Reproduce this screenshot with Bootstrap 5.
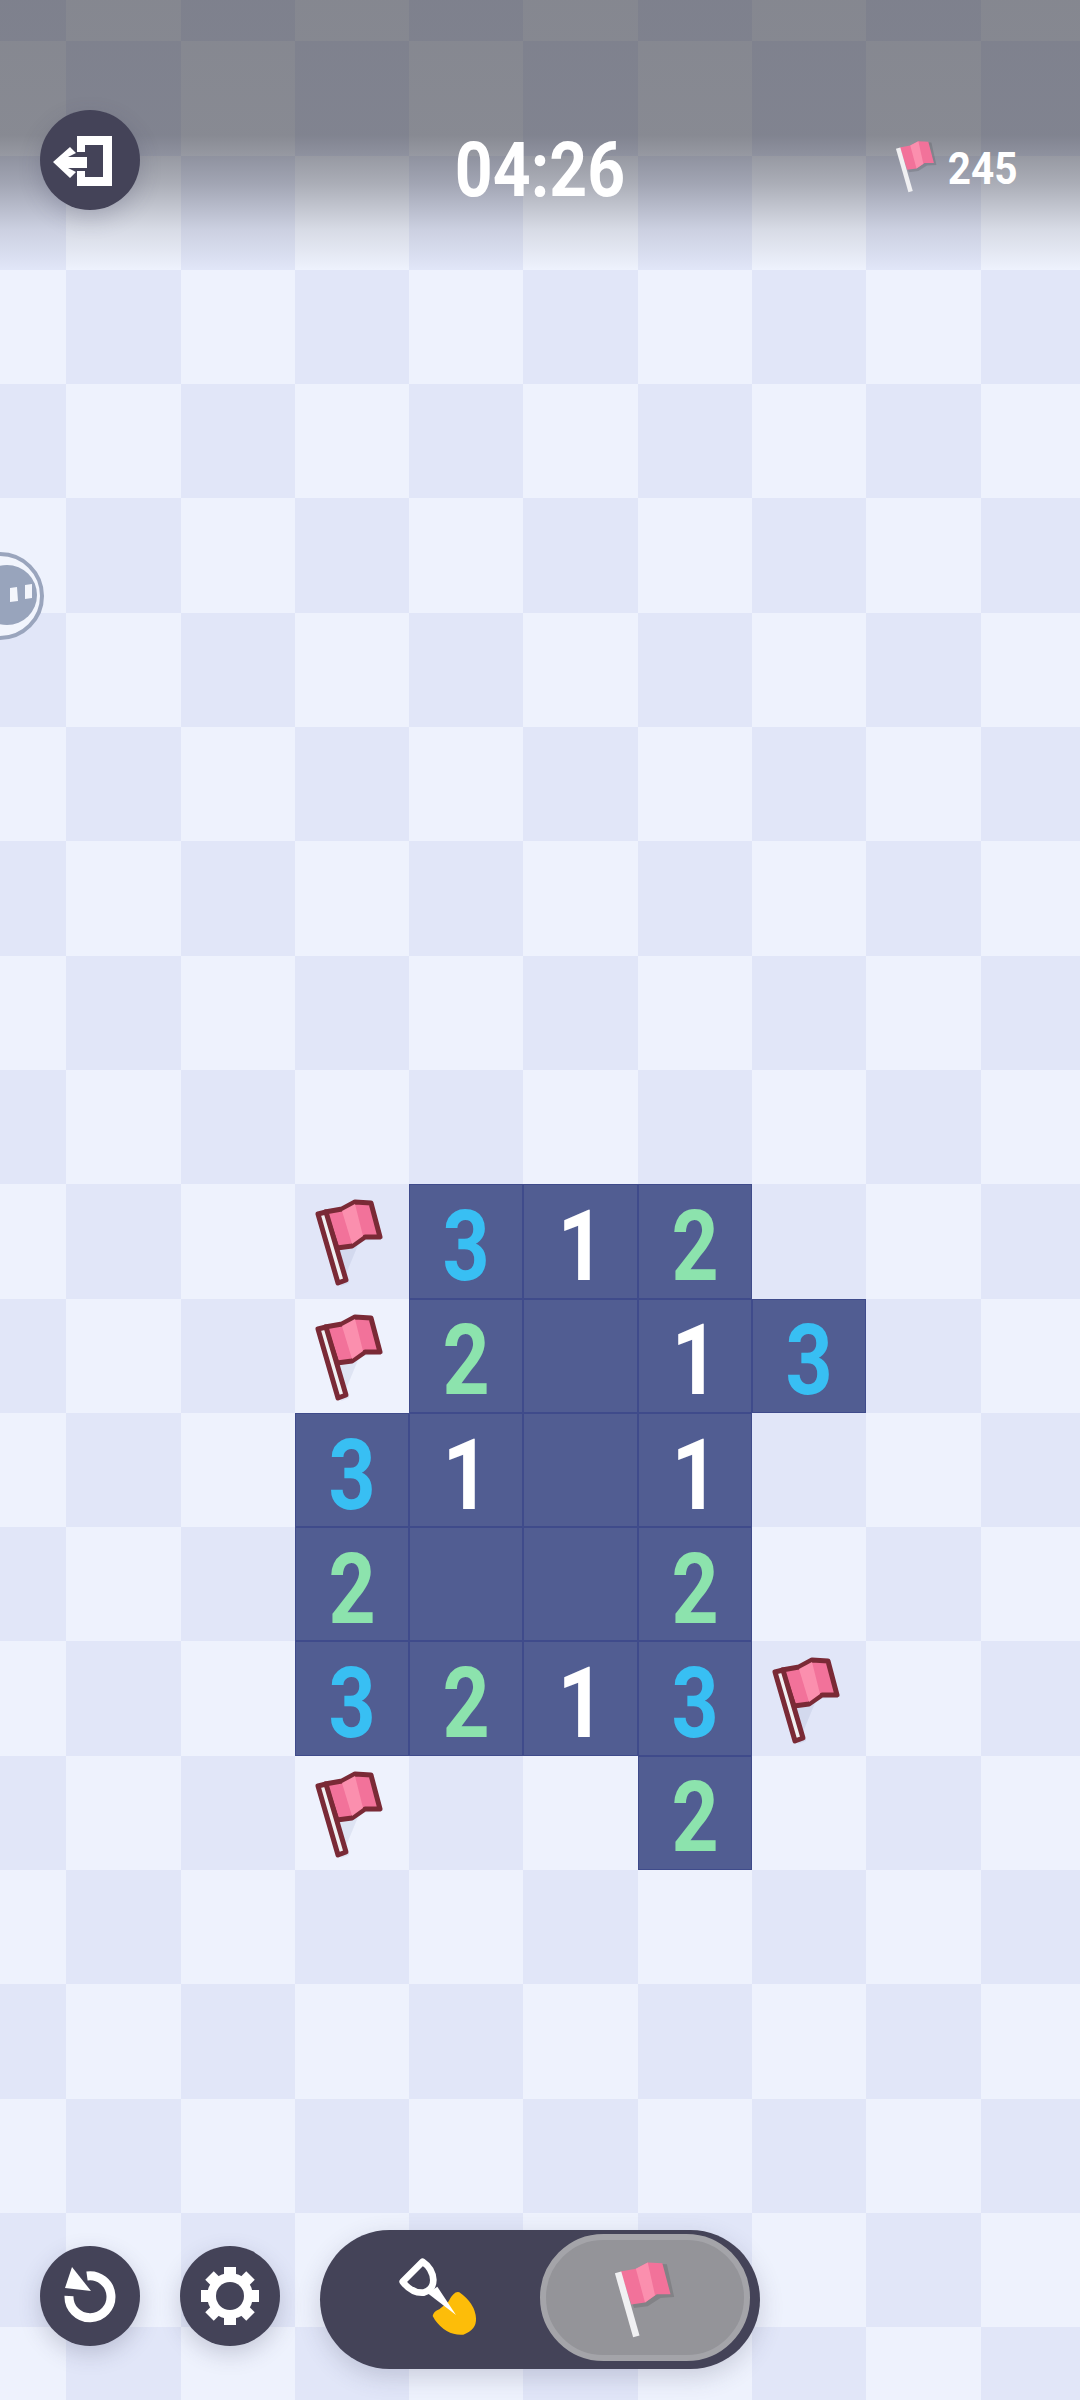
<!DOCTYPE html>
<html lang="en">
<head>
  <meta charset="UTF-8" />
  <meta name="viewport" content="width=device-width, initial-scale=1.0"/>
  <title>Minesweeper</title>
  <link href="https://cdn.jsdelivr.net/npm/bootstrap@5.3.0/dist/css/bootstrap.min.css" rel="stylesheet"/>
  <style>
    :root {
      --tile-light: #eef2fd;
      --tile-dark: #e1e6f8;
      --tile-open: #515d92;
      --tile-line: #3f4b8b;
      --ui-dark: #444358;
    }
    html, body { height: 2400px; overflow: hidden; }
    body { background: var(--tile-light); font-family: Roboto, "Liberation Sans", sans-serif; }
    .screen { width: 1080px; height: 2400px; overflow: hidden; }
    .board {
      display: grid;
      grid-template-columns: repeat(10, 114.3px);
      grid-auto-rows: 114.3px;
      margin: -73px 0 0 -48px;
      width: 1143px;
    }
    .tile { display: flex; align-items: center; justify-content: center; }
    .tile-l { background: var(--tile-light); }
    .tile-d { background: var(--tile-dark); }
    .tile-o { background: var(--tile-open); box-shadow: inset 0 0 0 1px var(--tile-line); }
    .num { font-size: 98px; font-weight: 700; line-height: 1; padding-top: 11px; transform: scaleX(.84); }
    .n1 { color: #fff; }
    .n2 { color: #8ce3ad; }
    .n3 { color: #38bff3; }
    .topshade {
      position: absolute; left: 0; top: 0; width: 1080px; height: 270px;
      background: linear-gradient(rgba(15,15,21,.47) 0, rgba(15,15,21,.46) 50%, rgba(15,15,21,.3) 68%, rgba(15,15,21,.1) 85%, rgba(15,15,21,0) 100%);
    }
    .round-btn {
      position: absolute; width: 100px; height: 100px; border-radius: 50%;
      background: var(--ui-dark); box-shadow: 0 8px 22px rgba(60,60,90,.22);
    }
    .btn-exit { left: 40px; top: 110px; }
    .btn-undo { left: 40px; top: 2246px; }
    .btn-gear { left: 180px; top: 2246px; }
    .timer {
      position: absolute; left: 0; top: 125px; width: 1080px; text-align: center;
      color: #fff; font-size: 76px; font-weight: 700; line-height: 90px; transform: scaleX(.87);
    }
    .flag-count { position: absolute; left: 881px; top: 130px; }
    .flag-total {
      position: absolute; left: 944px; top: 142px; width: 76px; text-align: center;
      color: #fff; font-size: 45px; font-weight: 700; line-height: 54px; transform: scaleX(.9);
    }
    .mode-switch {
      position: absolute; left: 320px; top: 2230px; width: 440px; height: 139px; border-radius: 70px;
      background: var(--ui-dark); box-shadow: 0 8px 24px rgba(60,60,90,.2);
    }
    .mode-on {
      position: absolute; left: 220px; top: 4px; width: 210px; height: 127px; border-radius: 64px;
      background: #949499; border: 6px solid #a4a4a9;
    }
    .shovel { position: absolute; left: 60px; top: 0; }
    .mascot { position: absolute; left: 0; top: 550px; }
  </style>
</head>
<body>
  <div class="screen position-relative">
    <div class="board" id="board"></div>

    <svg class="mascot" width="48" height="92" viewBox="0 0 48 92">
      <circle cx="0" cy="46" r="42" fill="#f2f5fd" stroke="#9aa5bd" stroke-width="4"/>
      <ellipse cx="7" cy="45" rx="30" ry="30" fill="#98a4bc"/>
      <path d="M10 38l7-1 1 14-8 1zM25 35l7-1v14l-7 1z" fill="#f4f6fc"/>
    </svg>

    <div class="topshade"></div>

    <div class="round-btn btn-exit">
      <svg width="100" height="100" viewBox="0 0 100 100">
        <path d="M37 26h35v50H37V61h8v6h18V35H45v7h-8z" fill="#fff"/>
        <path d="M13 52l17-15 6 6-8 4h19v11H28l8 4-6 6z" fill="#fff"/>
      </svg>
    </div>
    <div class="timer">04:26</div>
    <svg class="flag-count" width="71" height="71" viewBox="0 0 114 114"><use href="#flag-plain"/></svg>
    <div class="flag-total">245</div>

    <div class="round-btn btn-undo">
      <svg width="100" height="100" viewBox="0 0 100 100">
        <path d="M29 50A21 21 0 1 0 47 30" fill="none" stroke="#fff" stroke-width="9"/>
        <path d="M32 21l-7 21 26 3z" fill="#fff"/>
      </svg>
    </div>
    <div class="round-btn btn-gear">
      <svg width="100" height="100" viewBox="0 0 100 100">
        <g fill="#fff">
          <circle cx="50" cy="50" r="23"/>
          <rect x="44" y="21" width="12" height="58"/>
          <rect x="44" y="21" width="12" height="58" transform="rotate(45 50 50)"/>
          <rect x="44" y="21" width="12" height="58" transform="rotate(90 50 50)"/>
          <rect x="44" y="21" width="12" height="58" transform="rotate(135 50 50)"/>
        </g>
        <circle cx="50" cy="50" r="14" fill="#444358"/>
      </svg>
    </div>

    <div class="mode-switch">
      <svg class="shovel" width="180" height="130" viewBox="0 0 540 390">
        <path d="M158 258Q160 245 178 238L205 215Q222 182 238 187Q285 220 288 265Q290 300 250 314Q200 318 165 270Z" fill="#fdbd09"/>
        <path d="M143 190L172 170 228 255Z" fill="#fff"/>
        <path d="M68 155L128 95Q158 115 160 150Q160 180 130 188Q95 190 68 155Z" fill="none" stroke="#fff" stroke-width="20" stroke-linejoin="round"/>
      </svg>
      <div class="mode-on d-flex align-items-center justify-content-center">
        <svg width="104" height="104" viewBox="0 0 114 114"><use href="#flag-plain"/></svg>
      </div>
    </div>
  </div>

  <svg width="0" height="0" class="position-absolute">
    <defs>
      <g id="flag-plain">
        <path d="M31 32L46 28 62 19 81 20 89 56 74 57 60 66 45 68z" fill="#000" opacity=".12"/>
        <path d="M30 28l17-3 13-7 16 1 9 34-15 0-13 9-15 2z" fill="#f2729a"/>
        <path d="M47 25l13-7 8 36-11 8z" fill="#fb8fae"/>
        <path d="M24 30l7-2 20 70-7 2z" fill="#f0f0f2"/>
      </g>
      <g id="flag-marked">
        <path d="M46 102l8-3-18-60 30 18 22-2-10-30z" fill="#5a6aa0" opacity=".1"/>
        <path d="M30 28l17-3 13-7 16 1 9 34-15 0-13 9-15 2z" fill="#f2729a" stroke="#7a2a36" stroke-width="5" stroke-linejoin="round"/>
        <path d="M47 27l13-7 8 32-11 8z" fill="#fb8fae"/>
        <path d="M23 30l8-2 20 68-8 3z" fill="#f0f0f2" stroke="#7a2a36" stroke-width="5" stroke-linejoin="round"/>
      </g>
    </defs>
  </svg>

  <script src="https://cdn.jsdelivr.net/npm/bootstrap@5.3.0/dist/js/bootstrap.bundle.min.js"></script>
  <script>
    // . hidden, F flag, 0 open blank, 1-3 open number
    const opened = {
      11: "...F312...",
      12: "...F2013..",
      13: "...3101...",
      14: "...2002...",
      15: "...3213F..",
      16: "...F..2..."
    };
    const board = document.getElementById("board");
    let html = "";
    for (let r = 0; r < 22; r++) {
      const line = opened[r] || "..........";
      for (let c = 0; c < 10; c++) {
        const v = line[c];
        const base = (r + c) % 2 ? "tile-l" : "tile-d";
        if (v === ".") {
          html += `<div class="tile ${base}"></div>`;
        } else if (v === "F") {
          html += `<div class="tile ${base}"><svg width="114" height="114" viewBox="0 0 114 114"><use href="#flag-marked"/></svg></div>`;
        } else if (v === "0") {
          html += `<div class="tile tile-o"></div>`;
        } else {
          html += `<div class="tile tile-o"><span class="num n${v}">${v}</span></div>`;
        }
      }
    }
    board.innerHTML = html;
  </script>
</body>
</html>
